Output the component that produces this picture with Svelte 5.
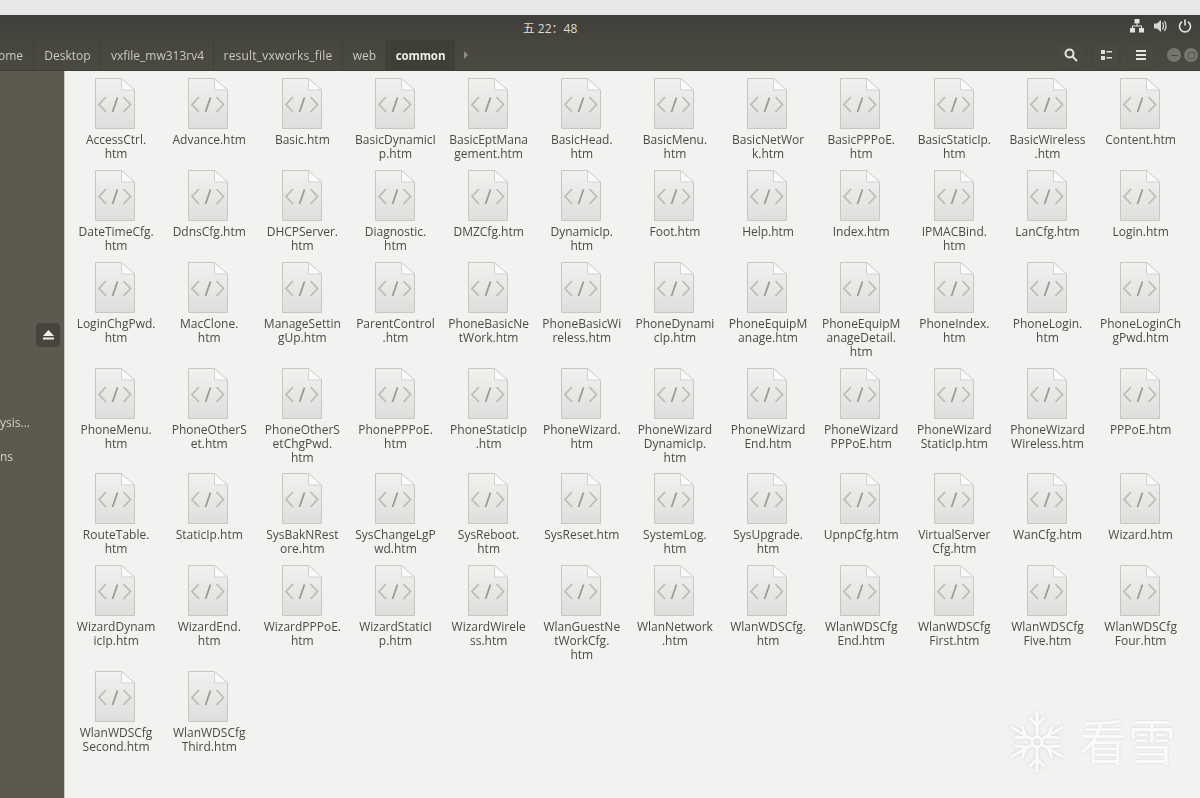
<script>
	// one string per file icon, \n is where nautilus wraps the name
	const files = `AccessCtrl.\nhtm|Advance.htm|Basic.htm|BasicDynamicI\np.htm|BasicEptMana\ngement.htm|BasicHead.\nhtm|BasicMenu.\nhtm|BasicNetWor\nk.htm|BasicPPPoE.\nhtm|BasicStaticIp.\nhtm|BasicWireless\n.htm|Content.htm|DateTimeCfg.\nhtm|DdnsCfg.htm|DHCPServer.\nhtm|Diagnostic.\nhtm|DMZCfg.htm|DynamicIp.\nhtm|Foot.htm|Help.htm|Index.htm|IPMACBind.\nhtm|LanCfg.htm|Login.htm|LoginChgPwd.\nhtm|MacClone.\nhtm|ManageSettin\ngUp.htm|ParentControl\n.htm|PhoneBasicNe\ntWork.htm|PhoneBasicWi\nreless.htm|PhoneDynami\ncIp.htm|PhoneEquipM\nanage.htm|PhoneEquipM\nanageDetail.\nhtm|PhoneIndex.\nhtm|PhoneLogin.\nhtm|PhoneLoginCh\ngPwd.htm|PhoneMenu.\nhtm|PhoneOtherS\net.htm|PhoneOtherS\netChgPwd.\nhtm|PhonePPPoE.\nhtm|PhoneStaticIp\n.htm|PhoneWizard.\nhtm|PhoneWizard\nDynamicIp.\nhtm|PhoneWizard\nEnd.htm|PhoneWizard\nPPPoE.htm|PhoneWizard\nStaticIp.htm|PhoneWizard\nWireless.htm|PPPoE.htm|RouteTable.\nhtm|StaticIp.htm|SysBakNRest\nore.htm|SysChangeLgP\nwd.htm|SysReboot.\nhtm|SysReset.htm|SystemLog.\nhtm|SysUpgrade.\nhtm|UpnpCfg.htm|VirtualServer\nCfg.htm|WanCfg.htm|Wizard.htm|WizardDynam\nicIp.htm|WizardEnd.\nhtm|WizardPPPoE.\nhtm|WizardStaticI\np.htm|WizardWirele\nss.htm|WlanGuestNe\ntWorkCfg.\nhtm|WlanNetwork\n.htm|WlanWDSCfg.\nhtm|WlanWDSCfg\nEnd.htm|WlanWDSCfg\nFirst.htm|WlanWDSCfg\nFive.htm|WlanWDSCfg\nFour.htm|WlanWDSCfg\nSecond.htm|WlanWDSCfg\nThird.htm`.split('|');

	const crumbs = ['ome', 'Desktop', 'vxfile_mw313rv4', 'result_vxworks_file', 'web'];
</script>

<div class="screen">
	<div class="strip"></div>

	<header class="panel">
		<span class="clock">五 22：48</span>
		<div class="tray">
			<svg width="14" height="14" viewBox="0 0 14 14" fill="#e4e3df">
				<rect x="4.500" y="0" width="5" height="4.500"/>
				<rect x="0" y="9" width="5" height="4.500"/>
				<rect x="9" y="9" width="5" height="4.500"/>
				<path d="M6.500 4.500h1v2h4.500v3h-1V7.500H3v2H2v-3h4.500z"/>
			</svg>
			<svg width="14" height="14" viewBox="0 0 14 14" fill="#d8d7d2">
				<path d="M0 4.500h3L7 1v12L3 9.500H0z"/>
				<path d="M8.500 3.500q2 3.500 0 7M10.500 2q3 5 0 10" fill="none" stroke="#d8d7d2" stroke-width="1.300"/>
			</svg>
			<svg width="14" height="14" viewBox="0 0 14 14" fill="none" stroke="#dddcd8" stroke-width="1.700">
				<path d="M4 2.800a5.500 5.500 0 1 0 6 0"/>
				<path d="M7 0.500v6"/>
			</svg>
		</div>
	</header>

	<nav class="toolbar">
		<div class="path">
			{#each crumbs as c}
				<span class="crumb">{c}</span>
			{/each}
			<span class="crumb current">common</span>
			<svg class="more" width="4" height="8" viewBox="0 0 4 8" fill="#8f8d85"><path d="M0 0l4 4-4 4z"/></svg>
		</div>
		<div class="actions">
			<button>
				<svg width="14" height="14" viewBox="0 0 14 14" fill="none" stroke="#e6e5e1" stroke-width="2">
					<circle cx="5.500" cy="5.500" r="4"/>
					<path d="M8.500 8.500l4.500 4.500"/>
				</svg>
			</button>
			<button>
				<svg width="11" height="10" viewBox="0 0 11 10" fill="#dfded9">
					<rect x="0" y="0" width="4" height="4"/>
					<rect x="0" y="6" width="4" height="4"/>
					<rect x="5.500" y="1" width="5.500" height="1.500"/>
					<rect x="5.500" y="7" width="5.500" height="1.500"/>
				</svg>
			</button>
			<button>
				<svg width="10" height="10" viewBox="0 0 10 10" fill="#e6e5e1">
					<rect y="0" width="10" height="2"/>
					<rect y="4" width="10" height="2"/>
					<rect y="8" width="10" height="2"/>
				</svg>
			</button>
			<div class="winbtns">
				<span class="win"><i class="dash"></i></span>
				<span class="win"><i class="box"></i></span>
			</div>
		</div>
	</nav>

	<main class="body">
		<aside class="sidebar">
			<button class="eject">
				<svg width="11" height="10" viewBox="0 0 11 10" fill="#f0efeb">
					<path d="M5.500 0L11 6H0z"/>
					<rect y="7.500" width="11" height="2"/>
				</svg>
			</button>
			<span class="side first">ysis...</span>
			<span class="side second">ns</span>
		</aside>

		<section class="files">
			{#each files as name}
				<div class="file">
					<svg class="doc" width="42" height="53" viewBox="0 0 42 53">
						<defs>
							<linearGradient id="page" x1="0" y1="0" x2="0" y2="1">
								<stop offset="0" stop-color="#f1f1ef"/>
								<stop offset="1" stop-color="#dededc"/>
							</linearGradient>
						</defs>
						<path d="M1.500 1.500H27.500L40.500 13V51.500H1.500z" fill="url(#page)" stroke="#c6c6c3"/>
						<path d="M27.500 1.500V13H40.500z" fill="#fafafa" stroke="#d2d2cf"/>
						<path d="M12 20L5 27.500l7 7.500M29.500 20l7 7.500-7 7.500" fill="none" stroke="#bcbcb9" stroke-width="1.800"/>
						<path d="M23.500 20.500L18.500 35" fill="none" stroke="#9a9a97" stroke-width="1.800"/>
					</svg>
					<span class="label">{name}</span>
				</div>
			{/each}

			<div class="mark">
				<svg class="flake" width="60" height="64" viewBox="0 0 60 64" fill="none" stroke="#fafafa" stroke-width="3">
					<circle cx="30" cy="32" r="5"/>
					<path d="M30 2v24M30 38v24M4 17l21 12M35 35l21 12M4 47l21-12M35 29l21-12"/>
					<path d="M22 7l8 8 8-8M22 57l8-8 8 8M7 28l12-1-4-11M53 28l-12-1 4-11M7 36l12 1-4 11M53 36l-12 1 4 11"/>
				</svg>
				<span class="mark-text">看雪</span>
			</div>
		</section>
	</main>
</div>

<style>
	:global(body) {
		margin: 0;
		background: #f2f2f0;
	}

	.screen {
		width: 1200px;
		height: 798px;
		overflow: hidden;
		display: flex;
		flex-direction: column;
		font-family: "Open Sans", "Noto Sans CJK SC", sans-serif;
		filter: blur(0.35px);
	}

	.strip {
		height: 15px;
		flex: none;
		background: #e8e8e8;
	}

	.panel {
		height: 25px;
		flex: none;
		display: flex;
		align-items: center;
		justify-content: center;
		position: relative;
		padding-right: 100px;
		background: linear-gradient(#3f3e39, #45443d);
		color: #dcdbd6;
		font-size: 12px;
	}

	.tray {
		position: absolute;
		right: 8px;
		top: 4px;
		display: flex;
		align-items: center;
		gap: 10px;
	}

	.toolbar {
		height: 31px;
		flex: none;
		display: flex;
		justify-content: space-between;
		background: linear-gradient(#47463e, #4b4a42);
		border-bottom: 1px solid #3c3b35;
		box-sizing: border-box;
	}

	.path {
		display: flex;
		align-items: stretch;
		font-size: 12px;
		color: #c9c8c1;
	}

	.crumb {
		display: flex;
		align-items: center;
		justify-content: center;
		box-sizing: border-box;
		border-right: 1px solid #403f38;
	}

	.crumb:nth-child(1) { width: 34px; justify-content: flex-end; padding-right: 10px; }
	.crumb:nth-child(2) { width: 66px; padding-left: 2px; }
	.crumb:nth-child(3) { width: 114px; padding-left: 2px; }
	.crumb:nth-child(4) { width: 129px; letter-spacing: 0.2px; }
	.crumb:nth-child(5) { width: 43px; padding-left: 1px; }

	.current {
		width: 69px;
		background: #3f3e37;
		color: #eeede8;
		font-size: 11.500px;
		font-weight: 700;
		letter-spacing: -0.1px;
		border-right: none;
	}

	.more {
		align-self: center;
		margin-left: 9px;
	}

	.actions {
		display: flex;
		align-items: center;
		gap: 7px;
		padding-right: 2px;
	}

	.actions button {
		width: 28px;
		height: 27px;
		padding: 0;
		border: 1px solid #45443d;
		border-radius: 3px;
		background: #4a4941;
		display: flex;
		align-items: center;
		justify-content: center;
	}

	.winbtns {
		display: flex;
		gap: 3px;
		margin-left: 5px;
	}

	.win {
		width: 14px;
		height: 14px;
		border-radius: 50%;
		background: #77766d;
		display: flex;
		align-items: center;
		justify-content: center;
	}

	.dash {
		width: 7px;
		height: 1px;
		background: #4f4e46;
	}

	.box {
		width: 5px;
		height: 5px;
		border: 1px solid #5c5b53;
	}

	.body {
		flex: 1;
		display: flex;
		min-height: 0;
	}

	.sidebar {
		width: 64px;
		flex: none;
		display: flex;
		flex-direction: column;
		background: #5c5a4f;
		color: #d2d1ca;
		font-size: 12px;
		border-right: 1px solid #c9c8c3;
	}

	.eject {
		width: 24px;
		height: 24px;
		margin: 252px 0 0 36px;
		padding: 0;
		border: none;
		border-radius: 4px;
		background: #47463e;
		display: flex;
		align-items: center;
		justify-content: center;
	}

	.side {
		line-height: 16px;
	}

	.first {
		margin-top: 68px;
	}

	.second {
		margin-top: 18px;
	}

	.files {
		flex: 1;
		position: relative;
		display: grid;
		grid-template-columns: repeat(12, 93.150px);
		grid-template-rows: 92px 92px 105.500px 105.500px 92px 105.500px auto;
		align-content: start;
		padding: 6px 0 0 4.500px;
		background: #f2f2f0;
	}

	.file {
		display: flex;
		flex-direction: column;
		align-items: center;
	}

	.doc {
		flex: none;
		margin: 0 1.500px 3px 0;
	}

	.label {
		white-space: pre-line;
		text-align: center;
		font-size: 12px;
		line-height: 14px;
		color: #4b4b46;
	}

	.mark {
		position: absolute;
		left: 942px;
		top: 639px;
		display: flex;
		align-items: center;
		gap: 12px;
	}

	.flake {
		filter: drop-shadow(0 0 1.500px #d2d2d0);
	}

	.mark-text {
		font-size: 48px;
		line-height: 60px;
		letter-spacing: 1px;
		color: #fafafa;
		text-shadow: 0 0 2px #cfcfcd;
	}
</style>
